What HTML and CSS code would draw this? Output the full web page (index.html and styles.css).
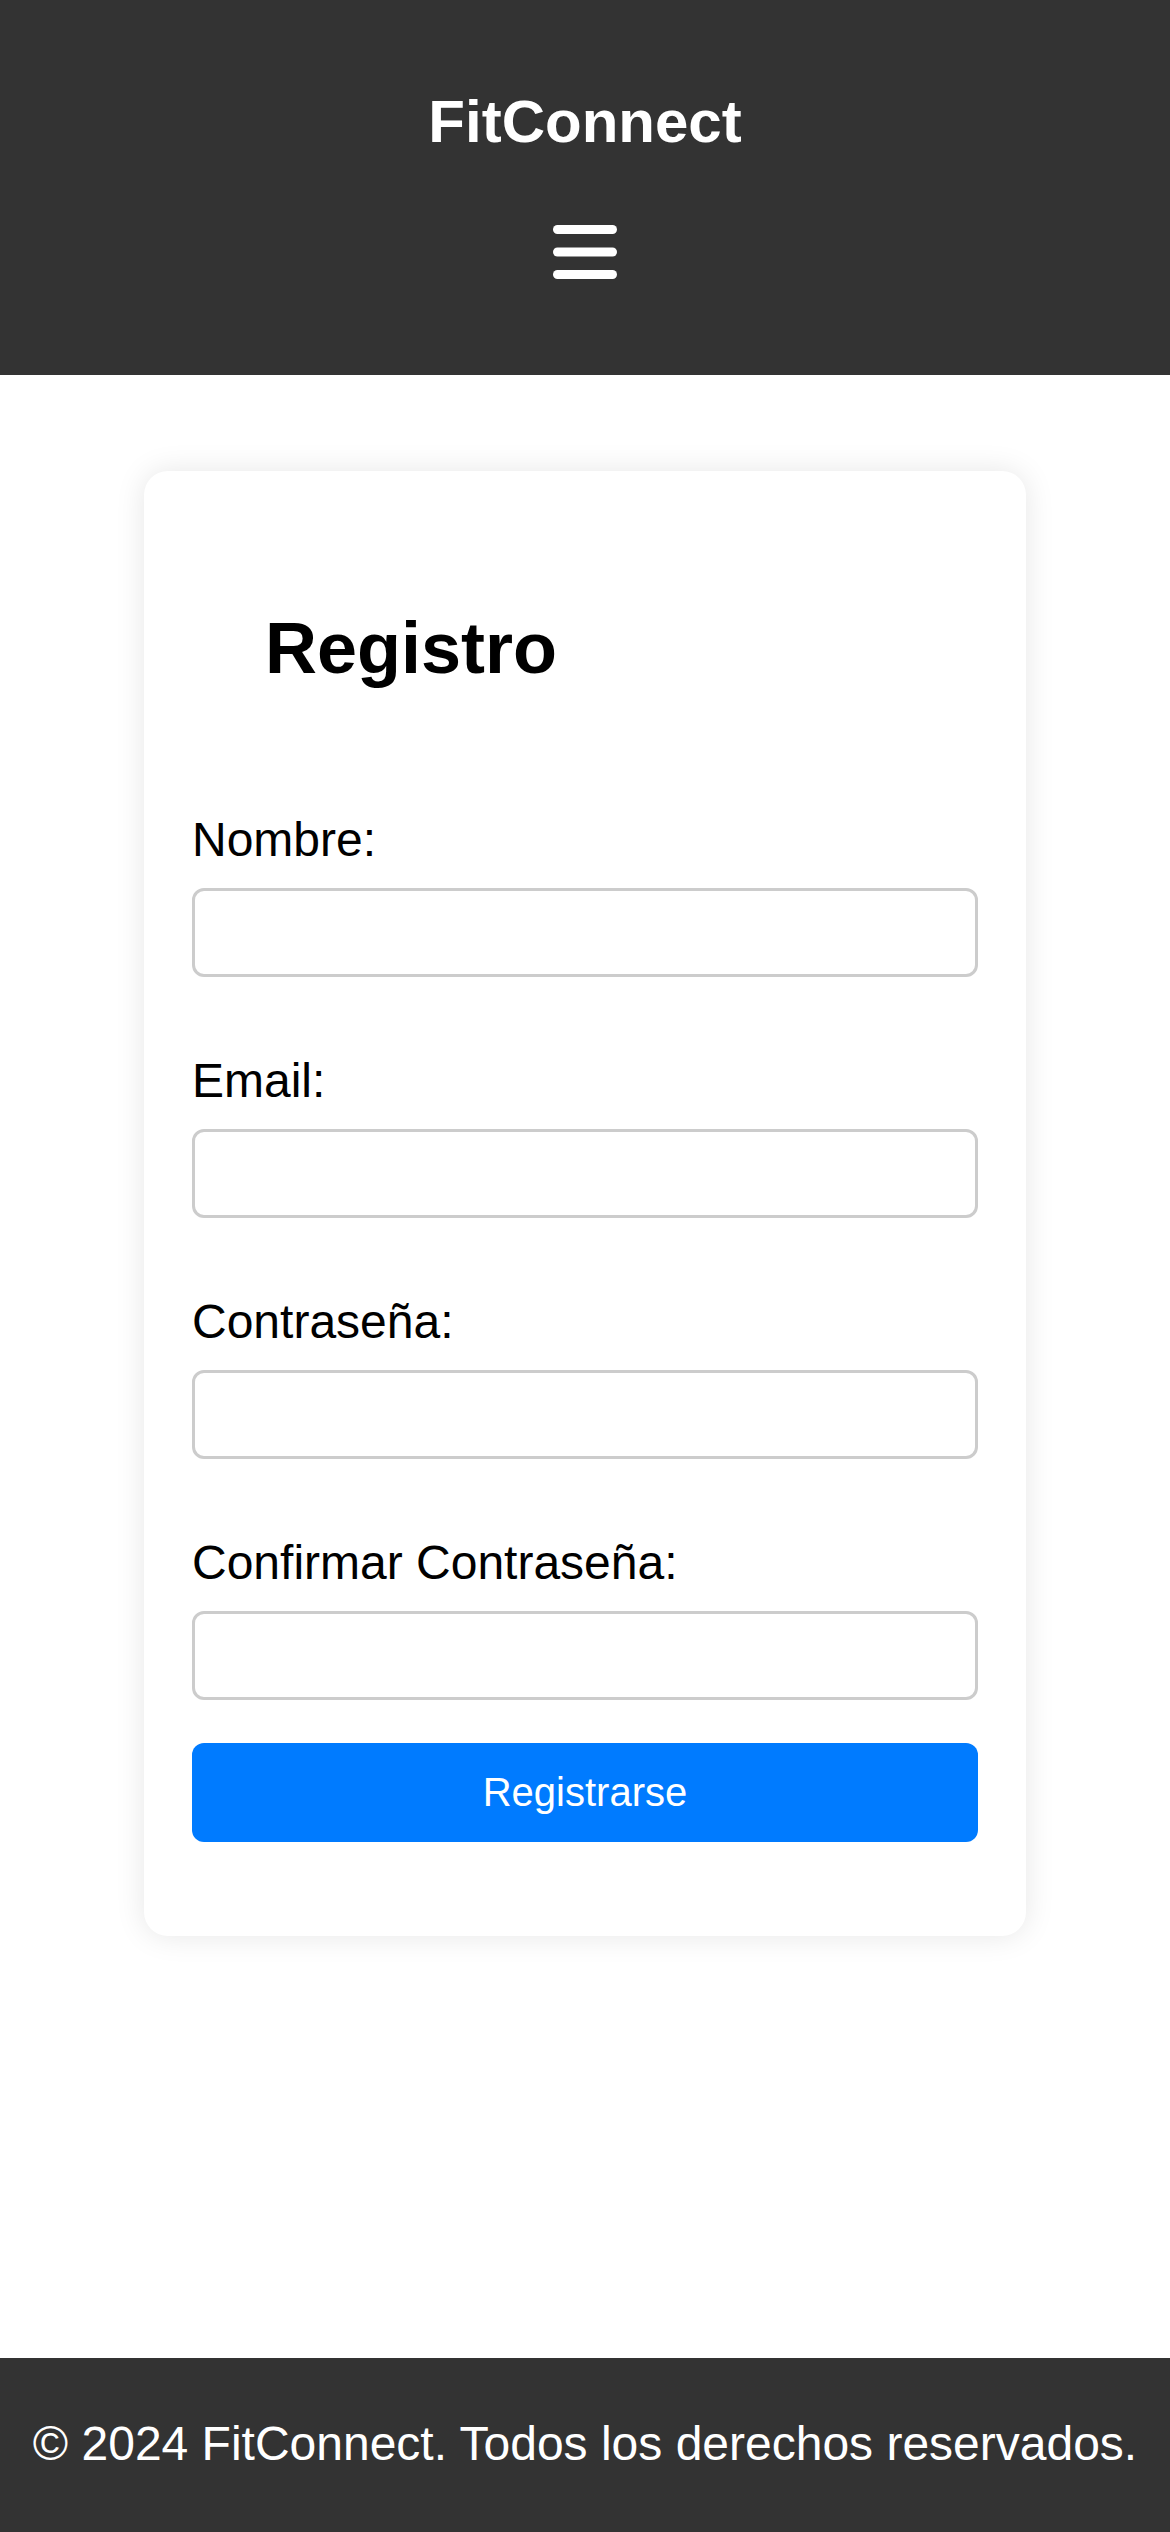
FILE: index.html
```html
<!DOCTYPE html>
<html lang="es">
<head>
<meta charset="utf-8">
<title>FitConnect - Registro</title>
<link rel="stylesheet" href="styles.css">
</head>
<body>
<header class="site-header">
  <h1 class="brand">FitConnect</h1>
  <button class="menu-toggle" aria-label="Menú">
    <svg width="64" height="54" viewBox="0 0 64 54">
      <rect x="0" y="0" width="64" height="9" rx="4.5" fill="#fff"/>
      <rect x="0" y="22.5" width="64" height="9" rx="4.5" fill="#fff"/>
      <rect x="0" y="45" width="64" height="9" rx="4.5" fill="#fff"/>
    </svg>
  </button>
</header>
<main class="main">
  <section class="card">
    <h2 class="card-title">Registro</h2>
    <form class="form">
      <div class="group">
        <label class="label" for="nombre">Nombre:</label>
        <input class="input" type="text" id="nombre">
      </div>
      <div class="group">
        <label class="label" for="email">Email:</label>
        <input class="input" type="email" id="email">
      </div>
      <div class="group">
        <label class="label" for="pass">Contraseña:</label>
        <input class="input" type="password" id="pass">
      </div>
      <div class="group">
        <label class="label" for="pass2">Confirmar Contraseña:</label>
        <input class="input" type="password" id="pass2">
      </div>
      <button class="submit" type="button">Registrarse</button>
    </form>
  </section>
</main>
<footer class="site-footer">
  <p class="footer-text">© 2024 FitConnect. Todos los derechos reservados.</p>
</footer>
</body>
</html>
```
FILE: styles.css
```css
* { box-sizing: border-box; }
html, body { margin: 0; padding: 0; }
body {
  font-family: "Liberation Sans", Arial, sans-serif;
  color: #000;
  background: #fff;
  min-height: 100vh;
  display: flex;
  flex-direction: column;
}
.site-header {
  background: #333;
  height: 375px;
  padding-top: 87px;
  display: flex;
  flex-direction: column;
  align-items: center;
}
.brand {
  margin: 0;
  color: #fff;
  font-size: 60px;
  font-weight: bold;
  line-height: 69px;
}
.menu-toggle {
  margin-top: 69px;
  padding: 0;
  border: 0;
  background: none;
  display: block;
  width: 64px;
  height: 54px;
}
.menu-toggle svg { display: block; }
.main {
  flex: 1;
  display: flex;
  flex-direction: column;
  align-items: center;
  padding-top: 96px;
}
.card {
  width: 882px;
  background: #fff;
  border-radius: 24px;
  box-shadow: 0 0 30px rgba(0, 0, 0, 0.1);
  padding: 136px 48px 94px;
}
.card-title {
  margin: 0 0 122px;
  padding-left: 73px;
  font-size: 72px;
  font-weight: bold;
  line-height: 83px;
}
.form { display: flex; flex-direction: column; }
.group + .group { margin-top: 76px; }
.label {
  display: block;
  font-size: 48px;
  line-height: 55px;
  margin-bottom: 21px;
}
.input {
  display: block;
  width: 100%;
  height: 89px;
  border: 3px solid #ccc;
  border-radius: 12px;
  padding: 0 24px;
  font-size: 40px;
  font-family: "Liberation Sans", Arial, sans-serif;
  background: #fff;
}
.submit {
  margin-top: 43px;
  width: 100%;
  height: 99px;
  border: 0;
  border-radius: 12px;
  background: #007bff;
  color: #fff;
  font-family: "Liberation Sans", Arial, sans-serif;
  font-size: 40px;
  line-height: 47px;
  padding: 0;
}
.site-footer {
  background: #333;
  color: #fff;
  text-align: center;
  padding: 58px 0 61px;
}
.footer-text {
  margin: 0;
  font-size: 48px;
  line-height: 55px;
}
```
